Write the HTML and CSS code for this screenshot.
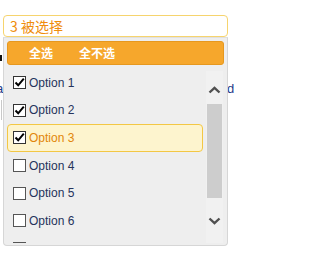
FILE: index.html
```html
<!DOCTYPE html>
<html>
<head>
<meta charset="utf-8">
<link rel="stylesheet" href="styles.css">
</head>
<body>
<div class="behind">
  <span class="bg-box"></span>
  <span class="bg-a">a</span>
  <span class="bg-line"></span>
  <span class="bg-d">d</span>
</div>
<div class="ms">
  <div class="ms-button">3 被选择</div>
  <div class="ms-panel">
    <div class="ms-actions">
      <span class="ms-act">全选</span>
      <span class="ms-act">全不选</span>
    </div>
    <div class="ms-body">
      <ul class="ms-list">
        <li class="ms-item"><span class="cb checked"><svg viewBox="0 0 13 13" width="13" height="13"><path d="M2.5 6.5 L5.2 9.3 L10.8 2.6" fill="none" stroke="#000" stroke-width="2"/></svg></span><span class="lbl">Option 1</span></li>
        <li class="ms-item"><span class="cb checked"><svg viewBox="0 0 13 13" width="13" height="13"><path d="M2.5 6.5 L5.2 9.3 L10.8 2.6" fill="none" stroke="#000" stroke-width="2"/></svg></span><span class="lbl">Option 2</span></li>
        <li class="ms-item active"><span class="cb checked"><svg viewBox="0 0 13 13" width="13" height="13"><path d="M2.5 6.5 L5.2 9.3 L10.8 2.6" fill="none" stroke="#000" stroke-width="2"/></svg></span><span class="lbl">Option 3</span></li>
        <li class="ms-item"><span class="cb"></span><span class="lbl">Option 4</span></li>
        <li class="ms-item"><span class="cb"></span><span class="lbl">Option 5</span></li>
        <li class="ms-item"><span class="cb"></span><span class="lbl">Option 6</span></li>
        <li class="ms-item"><span class="cb"></span><span class="lbl">Option 7</span></li>
      </ul>
      <div class="sb">
        <svg class="sb-arrow up" viewBox="0 0 13 8" width="13" height="8"><path d="M1.5 6.5 L6.5 1.8 L11.5 6.5" fill="none" stroke="#505050" stroke-width="2.4"/></svg>
        <div class="sb-thumb"></div>
        <svg class="sb-arrow down" viewBox="0 0 13 8" width="13" height="8"><path d="M1.5 1.5 L6.5 6.2 L11.5 1.5" fill="none" stroke="#505050" stroke-width="2.4"/></svg>
      </div>
    </div>
  </div>
</div>
</body>
</html>
```

FILE: styles.css
```css
html, body {
  margin: 0;
  padding: 0;
  background: #ffffff;
  width: 234px;
  height: 254px;
  overflow: hidden;
  font-family: "Liberation Sans", "Noto Sans CJK SC", sans-serif;
}

.behind {
  position: absolute;
  left: 0;
  top: 0;
  width: 234px;
  height: 254px;
}

.bg-box {
  position: absolute;
  left: 0;
  top: 55px;
  width: 2px;
  height: 6px;
  background: #111;
}

.bg-a {
  position: absolute;
  left: -4px;
  top: 81px;
  font-size: 13px;
  color: #1f3a8a;
}

.bg-line {
  position: absolute;
  left: 1px;
  top: 100px;
  width: 1px;
  height: 20px;
  background: #c8c8c8;
}

.bg-d {
  position: absolute;
  left: 227px;
  top: 81px;
  font-size: 13px;
  color: #1f3a8a;
}

.ms {
  position: absolute;
  left: 3px;
  top: 15px;
  width: 225px;
}

.ms-button {
  height: 20px;
  border: 1px solid #f6d46e;
  border-radius: 4px;
  background: #fff;
  color: #ef8d0c;
  font-family: "Noto Sans CJK SC", sans-serif;
  font-size: 14px;
  line-height: 20px;
  padding-left: 6px;
}

.ms-panel {
  height: 204px;
  border: 1px solid #d6d6d6;
  border-top: 1px solid #e0e0e0;
  border-radius: 0 0 4px 4px;
  background: #eeeeee;
  padding: 3px 3px 0 3px;
  display: flex;
  flex-direction: column;
  overflow: hidden;
}

.ms-actions {
  height: 22px;
  background: #f6a72c;
  border: 1px solid #e6981f;
  border-radius: 3px;
  display: flex;
  gap: 26px;
  padding-left: 21px;
  align-items: center;
  flex-shrink: 0;
}

.ms-act {
  color: #fff;
  font-family: "Noto Sans CJK SC", sans-serif;
  font-weight: bold;
  font-size: 12px;
  line-height: 22px;
}

.ms-body {
  display: flex;
  gap: 3px;
  margin-top: 4px;
  margin-bottom: 2px;
  flex: 1;
  min-height: 0;
}

.ms-list {
  list-style: none;
  margin: 0;
  padding: 0;
  width: 196px;
  overflow: hidden;
}

.ms-item {
  height: 27.6px;
  box-sizing: border-box;
  border: 1px solid transparent;
  border-radius: 4px;
  display: flex;
  align-items: center;
  padding-left: 5px;
  gap: 3px;
  font-size: 12px;
  color: #25335c;
}

.ms-item.active {
  background: #fdf4ce;
  border-color: #f3c744;
  color: #e2860a;
}

.cb {
  width: 11px;
  height: 11px;
  border: 1px solid #555;
  background: #fff;
  display: flex;
  position: relative;
  flex-shrink: 0;
}

.cb.checked {
  border-color: #333;
}

.cb svg {
  position: absolute;
  left: -1px;
  top: -1px;
}

.lbl {
  line-height: 14px;
}

.sb {
  width: 17px;
  margin-top: 2px;
  background: #f1f1f1;
  display: flex;
  flex-direction: column;
  align-items: center;
}

.sb-arrow.up {
  margin-top: 15px;
}

.sb-thumb {
  width: 15px;
  height: 94px;
  background: #cdcdcd;
  margin-top: 10px;
}

.sb-arrow.down {
  margin-top: 19px;
}
```
